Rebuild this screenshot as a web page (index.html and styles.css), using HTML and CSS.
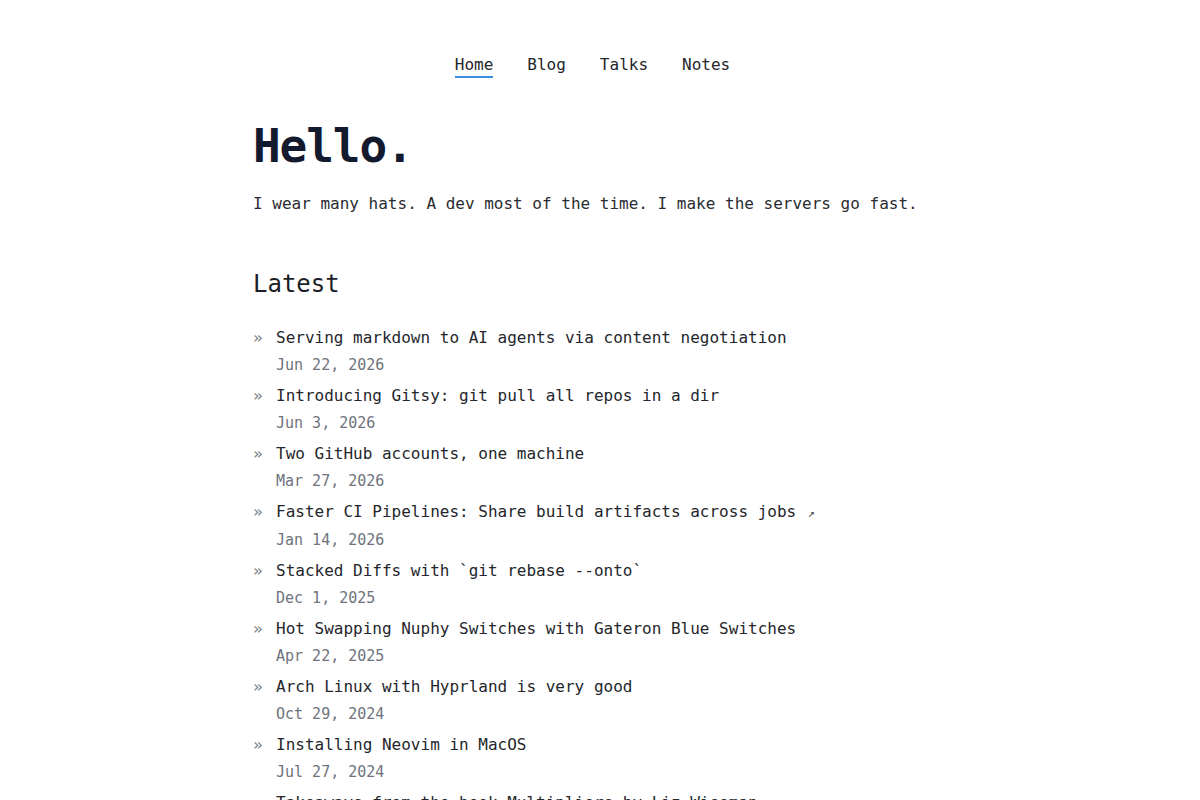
FILE: index.html
```html
<!DOCTYPE html>
<html lang="en">
<head>
<meta charset="utf-8">
<title>Home</title>
<link rel="stylesheet" href="styles.css">
</head>
<body>
<div class="page">
  <nav class="nav">
    <a class="nav-link active" href="#">Home</a>
    <a class="nav-link" href="#">Blog</a>
    <a class="nav-link" href="#">Talks</a>
    <a class="nav-link" href="#">Notes</a>
  </nav>

  <header class="intro">
    <h1 class="title">Hello.</h1>
    <p class="lede">I wear many hats. A dev most of the time. I make the servers go fast.</p>
  </header>

  <section class="latest">
    <h2 class="section-title">Latest</h2>
    <ul class="posts">
      <li class="post"><span class="mark">»</span><div><a class="post-title" href="#">Serving markdown to AI agents via content negotiation</a><div class="post-date">Jun 22, 2026</div></div></li>
      <li class="post"><span class="mark">»</span><div><a class="post-title" href="#">Introducing Gitsy: git pull all repos in a dir</a><div class="post-date">Jun 3, 2026</div></div></li>
      <li class="post"><span class="mark">»</span><div><a class="post-title" href="#">Two GitHub accounts, one machine</a><div class="post-date">Mar 27, 2026</div></div></li>
      <li class="post"><span class="mark">»</span><div><a class="post-title" href="#">Faster CI Pipelines: Share build artifacts across jobs <span class="ext">↗</span></a><div class="post-date">Jan 14, 2026</div></div></li>
      <li class="post"><span class="mark">»</span><div><a class="post-title" href="#">Stacked Diffs with `git rebase --onto`</a><div class="post-date">Dec 1, 2025</div></div></li>
      <li class="post"><span class="mark">»</span><div><a class="post-title" href="#">Hot Swapping Nuphy Switches with Gateron Blue Switches</a><div class="post-date">Apr 22, 2025</div></div></li>
      <li class="post"><span class="mark">»</span><div><a class="post-title" href="#">Arch Linux with Hyprland is very good</a><div class="post-date">Oct 29, 2024</div></div></li>
      <li class="post"><span class="mark">»</span><div><a class="post-title" href="#">Installing Neovim in MacOS</a><div class="post-date">Jul 27, 2024</div></div></li>
      <li class="post"><span class="mark">»</span><div><a class="post-title" href="#">Takeaways from the book Multipliers by Liz Wiseman</a><div class="post-date">May 12, 2024</div></div></li>
    </ul>
  </section>
</div>
</body>
</html>
```

FILE: styles.css
```css
* {
  box-sizing: border-box;
}

html, body {
  margin: 0;
  padding: 0;
  background: #ffffff;
}

body {
  font-family: "DejaVu Sans Mono", "Liberation Mono", monospace;
  font-size: 16px;
  line-height: 24px;
  color: #24262b;
}

a {
  color: inherit;
  text-decoration: none;
}

.page {
  width: 694px;
  margin: 0 auto;
}

/* top navigation */
.nav {
  display: flex;
  justify-content: center;
  gap: 34px;
  padding-top: 53px;
  padding-right: 15px;
}

.nav-link {
  display: block;
  line-height: 23px;
  color: #24262b;
  border-bottom: 2px solid transparent;
}

.nav-link.active {
  border-bottom-color: #3b8fdc;
}

/* intro */
.title {
  margin: 40px 0 0;
  font-size: 46px;
  line-height: 56px;
  font-weight: 700;
  letter-spacing: -1.1px;
  color: #131a2e;
}

.lede {
  margin: 18px 0 0;
  line-height: 24px;
  color: #2a2c31;
}

/* latest posts */
.section-title {
  margin: 52px 0 0;
  font-size: 24px;
  line-height: 32px;
  font-weight: 500;
  color: #1b1e27;
}

.posts {
  list-style: none;
  margin: 26px 0 0;
  padding: 0;
}

.post {
  display: grid;
  grid-template-columns: 23px 1fr;
  margin-bottom: 9px;
}

.mark {
  color: #7a7f88;
  line-height: 24px;
}

.post-title {
  display: block;
  line-height: 24px;
  color: #24262b;
}

.ext {
  font-size: 12px;
  color: #4a4e56;
  margin-left: 2px;
}

.post-date {
  margin-top: 5px;
  font-size: 15px;
  line-height: 20px;
  color: #6e737c;
}
```
